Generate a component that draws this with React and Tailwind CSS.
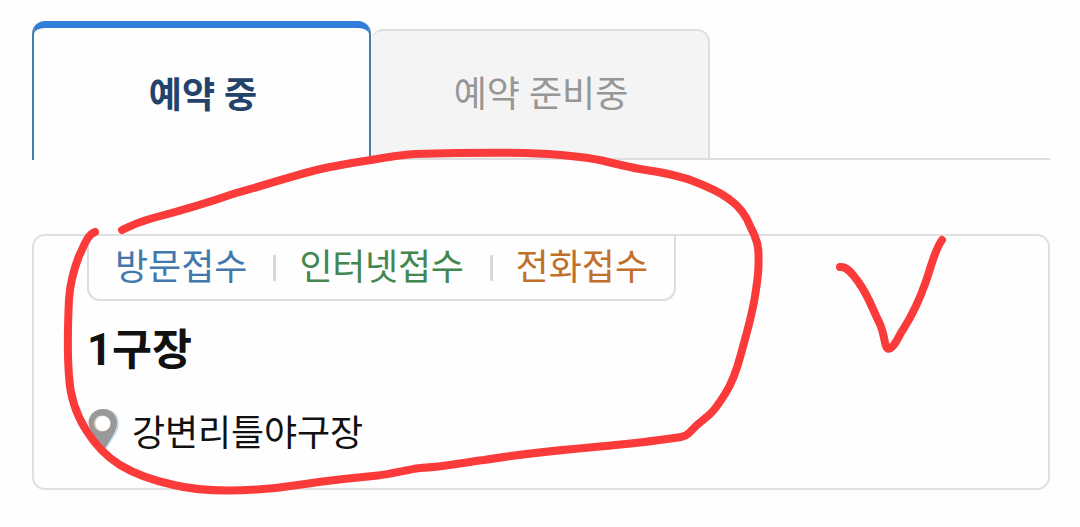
import React from "react";

const METHODS = [
  { label: "방문접수", color: "text-[#4278aa]" },
  { label: "인터넷접수", color: "text-[#43864f] tracking-[-0.3px]" },
  { label: "전화접수", color: "text-[#c07029]" },
];

const PinIcon = () => (
  <svg width="32" height="44" viewBox="0 0 32 44" className="shrink-0">
    <path
      d="M17 1C25.500 1 32 7 32 15.500C32 25 22 35 18 43C14 35 3 25 3 15.500C3 7 9 1 17 1Z"
      fill="#c4dce9"
    />
    <path
      d="M16 1C24 1 30 7 30 15C30 24 21 34 17 43C13 34 1.500 24 1.500 15C1.500 7 8 1 16 1Z"
      fill="#999"
    />
    <circle cx="15" cy="15.500" r="8" fill="#e5cfbd" />
    <circle cx="16" cy="15.500" r="7.500" fill="#fff" />
  </svg>
);

const Tabs = () => (
  <div className="flex h-[139px] items-end">
    <button
      type="button"
      className="flex h-[139px] w-[339px] items-center justify-center rounded-t-[13px] border-x-2 border-t-[7px] border-x-[#437fa9] border-t-[#317dda] pl-[3px] pt-[3px] text-[36px] font-bold text-[#24436a]"
    >
      <span className="leading-[40px]">예약 중</span>
    </button>
    <div className="flex h-[131px] flex-1 items-start border-b-2 border-[#dddee0]">
      <button
        type="button"
        className="flex h-[129px] w-[339px] items-center justify-center rounded-t-[13px] border-r-2 border-t-2 border-[#dddede] bg-[#f4f4f4] pl-[3px] text-[36px] text-[#969696]"
      >
        <span className="leading-[40px]">예약 준비중</span>
      </button>
    </div>
  </div>
);

const FieldCard = () => (
  <div className="mt-[74px] h-[256px] rounded-[13px] border-2 border-[#dfe0e1] pl-[53px]">
    <div className="flex h-[65px] w-[589px] items-center rounded-b-[13px] border-x-2 border-b-2 border-[#dcdcdd] pl-[26px] text-[36px] leading-[40px]">
      {METHODS.map((method, i) => (
        <React.Fragment key={method.label}>
          {i > 0 && <span className="ml-[26px] mr-[23px] h-[26px] w-[3px] bg-[#d9d9d9]" />}
          <span className={method.color}>{method.label}</span>
        </React.Fragment>
      ))}
    </div>
    <h2 className="mt-[24px] text-[43.5px] font-bold leading-[52px] text-[#111]">1구장</h2>
    <div className="mt-[31px] flex h-[44px] items-center gap-[13px]">
      <PinIcon />
      <span className="pt-[7px] text-[36px] leading-[40px] tracking-[-0.1px] text-[#111]">
        강변리틀야구장
      </span>
    </div>
  </div>
);

// hand-drawn circle and check mark laid over the card
const PenMarks = () => (
  <svg
    className="pointer-events-none absolute left-0 top-0"
    width="1080"
    height="527"
    viewBox="0 0 1080 527"
    fill="none"
    stroke="#fb3a3a"
    strokeWidth="8"
    strokeLinecap="round"
    strokeLinejoin="round"
  >
    <path d="M122 230C134 224 142 221 153 218C180 211 210 202 236 193C270 184 300 173 330 167C345 164 357 162 371 160C388 157 400 155 415 154C450 153 485 152.500 525 153C555 154 580 156 602 160.500C617 164 628 167 640 169C660 172 678 175 693 181C706 186 720 192 729 199C739 206 747 217 751 228C757 239 759 247 758.500 260C759 273 757 283 755 296C752 316 746 335 741 354C737 369 731 385 725 394C720 402 715 410 709 415L697 425L689 433Q686 436 681 437C650 442 625 444 600 446.500C560 450 520 454 484 460C460 463 445 467 420 468C405 470 392 474 378 475.500C350 478 325 481 305 484C280 488 255 490.500 228 490.500C207 490.500 190 489 174 485C155 481 135 474 120 465C104 455 94 443 86 430C76 414 70 397 69 376C67 350 68 320 69 299C70 285 74 269 79 256C84 246 87 235 95 232" />
    <path d="M840 267C848 266 854 276 859 283C868 295 872 308 879 322C884 332 884 341 886 346Q888 351 892 347C897 342 899 335 904 328C914 312 919 301 925 284C931 268 934 251 942 240" />
  </svg>
);

const App = () => {
  return (
    <div className="relative h-[527px] w-[1080px] overflow-hidden bg-[#fefefe] pl-[32px] pr-[30px] pt-[21px] font-[Roboto,'Noto_Sans_CJK_KR',sans-serif]">
      <Tabs />
      <FieldCard />
      <PenMarks />
    </div>
  );
};

export default App;
